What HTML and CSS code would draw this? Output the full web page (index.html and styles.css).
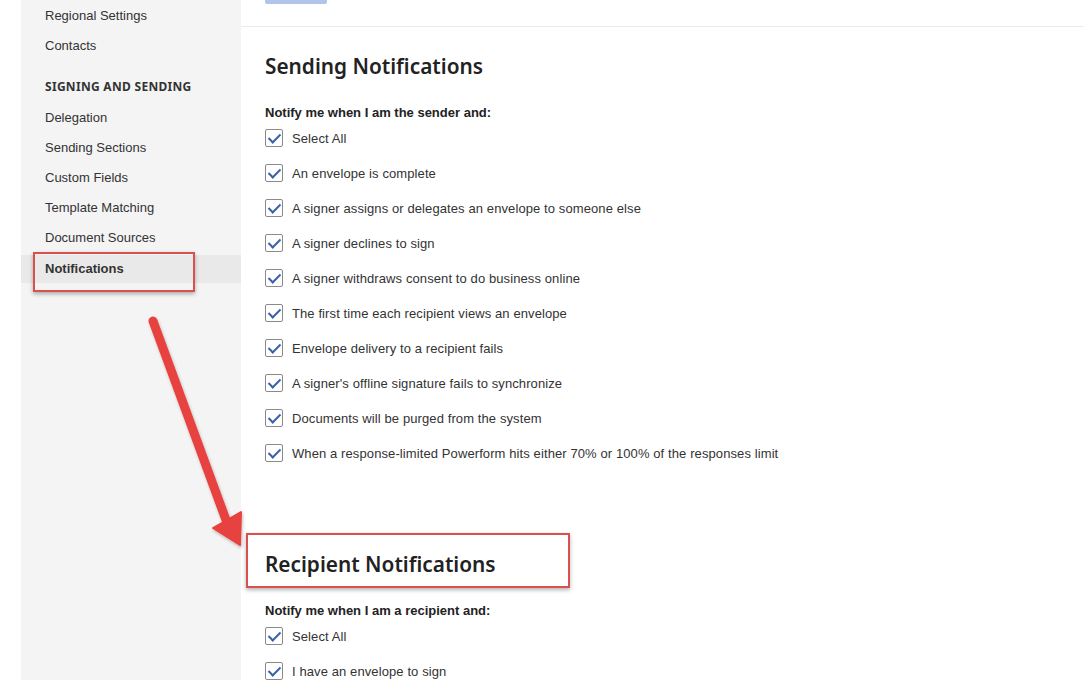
FILE: index.html
```html
<!DOCTYPE html>
<html lang="en">
  <head>
    <meta charset="UTF-8" />
    <meta name="viewport" content="width=device-width, initial-scale=1.0" />
    <title>Notifications</title>
    <link rel="stylesheet" href="styles.css">
  </head>
  <body>
    <div class="page">
      <nav class="sidebar">
        <a class="nav-item">Regional Settings</a>
        <a class="nav-item">Contacts</a>
        <div class="nav-heading">Signing and Sending</div>
        <a class="nav-item">Delegation</a>
        <a class="nav-item">Sending Sections</a>
        <a class="nav-item">Custom Fields</a>
        <a class="nav-item">Template Matching</a>
        <a class="nav-item">Document Sources</a>
        <a class="nav-item active marked">Notifications</a>
      </nav>

      <main class="content">
        <div class="topbar"><span class="save-btn"></span></div>

        <section class="section">
          <h2>Sending Notifications</h2>
          <p class="intro">Notify me when I am the sender and:</p>
          <ul class="checks">
            <li><span class="box"></span>Select All</li>
            <li><span class="box"></span>An envelope is complete</li>
            <li><span class="box"></span>A signer assigns or delegates an envelope to someone else</li>
            <li><span class="box"></span>A signer declines to sign</li>
            <li><span class="box"></span>A signer withdraws consent to do business online</li>
            <li><span class="box"></span>The first time each recipient views an envelope</li>
            <li><span class="box"></span>Envelope delivery to a recipient fails</li>
            <li><span class="box"></span>A signer's offline signature fails to synchronize</li>
            <li><span class="box"></span>Documents will be purged from the system</li>
            <li><span class="box"></span>When a response-limited Powerform hits either 70% or 100% of the responses limit</li>
          </ul>
        </section>

        <section class="section recipient">
          <h2 class="marked">Recipient Notifications</h2>
          <p class="intro">Notify me when I am a recipient and:</p>
          <ul class="checks">
            <li><span class="box"></span>Select All</li>
            <li><span class="box"></span>I have an envelope to sign</li>
          </ul>
        </section>
      </main>
    </div>

    <!-- annotation arrow -->
    <svg class="arrow" width="1084" height="680" viewBox="0 0 1084 680">
      <defs>
        <filter id="shadow" x="-20%" y="-20%" width="140%" height="140%">
          <feDropShadow dx="1" dy="2" stdDeviation="1.5" flood-color="#000" flood-opacity="0.25" />
        </filter>
      </defs>
      <g filter="url(#shadow)" fill="#e8423f" stroke="#e8423f">
        <line x1="153" y1="321" x2="226" y2="520" stroke-width="9" stroke-linecap="round" />
        <polygon points="240,545 213,528 241,512" stroke-width="2" stroke-linejoin="round" />
      </g>
    </svg>
  </body>
</html>
```

FILE: styles.css
```css
body {
  margin: 0;
  padding: 0;
  font-family: "Liberation Sans", Arial, sans-serif;
  font-size: 13px;
  color: #333;
  background-color: #fff;
  overflow: hidden;
}
.page {
  display: flex;
  height: 680px;
  padding-left: 21px;
}
.sidebar {
  width: 220px;
  flex-shrink: 0;
  background-color: #f4f4f4;
  display: flex;
  flex-direction: column;
  padding-top: 2px;
}
.nav-item {
  display: block;
  height: 30px;
  line-height: 28px;
  padding-left: 24px;
  color: #333;
}
.nav-item.active {
  font-weight: bold;
  background-color: #e9e9e9;
  margin-top: 1px;
  height: 28px;
  line-height: 28px;
}
.nav-heading {
  font-family: "Noto Sans", sans-serif;
  font-weight: bold;
  font-size: 12px;
  text-transform: uppercase;
  letter-spacing: 0.3px;
  color: #333;
  padding-left: 24px;
  margin-top: 10px;
  height: 32px;
  line-height: 30px;
}
.marked {
  position: relative;
}
.marked::after {
  content: "";
  position: absolute;
  border: 2px solid #d9504d;
  box-shadow: 0 2px 4px rgba(0, 0, 0, 0.3);
  pointer-events: none;
}
.nav-item.marked::after {
  left: 12px;
  right: 46px;
  top: -3px;
  bottom: -9px;
}
.content {
  flex: 1;
}
.topbar {
  height: 26px;
  border-bottom: 1px solid #ebebeb;
  padding-left: 24px;
}
.save-btn {
  display: block;
  width: 62px;
  height: 4px;
  background-color: #b1c4ec;
  border-radius: 0 0 2px 2px;
}
.section {
  padding: 0 24px;
}
.section h2 {
  font-family: "Noto Sans", sans-serif;
  font-weight: 600;
  font-size: 20.8px;
  line-height: 28px;
  color: #222;
  margin: 25px 0 0;
}
.intro {
  font-weight: bold;
  margin: 25px 0 0;
  line-height: 16px;
  color: #222;
}
.checks {
  list-style: none;
  padding: 0;
  margin: 8px 0 0;
  display: flex;
  flex-direction: column;
  gap: 17px;
  letter-spacing: 0.1px;
}
.checks li {
  display: flex;
  align-items: center;
  height: 18px;
}
.box {
  width: 16px;
  height: 16px;
  border: 1px solid #8a8a8a;
  border-radius: 2px;
  background-color: #fff;
  margin-right: 9px;
  position: relative;
  flex-shrink: 0;
}
.box::after {
  content: "";
  position: absolute;
  left: 5px;
  top: 1px;
  width: 5px;
  height: 10px;
  border: solid #3b62a8;
  border-width: 0 2px 2px 0;
  transform: rotate(45deg);
}
.recipient h2 {
  margin-top: 88px;
}
.recipient h2.marked::after {
  left: -19px;
  width: 320px;
  top: -17px;
  bottom: -10px;
}
.arrow {
  position: absolute;
  left: 0;
  top: 0;
  pointer-events: none;
}
```
